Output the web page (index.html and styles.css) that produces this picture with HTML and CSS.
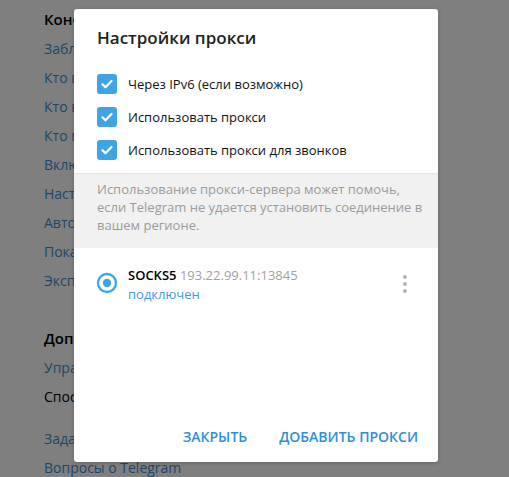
FILE: index.html
```html
<!DOCTYPE html>
<html lang="ru">
<head>
<meta charset="utf-8">
<link rel="stylesheet" href="styles.css">
</head>
<body>
<div class="page">
  <div class="settings">
    <div class="sec-title">Конфиденциальность</div>
    <div class="link">Заблокированные пользователи</div>
    <div class="link">Кто видит мой номер телефона</div>
    <div class="link">Кто видит время последнего входа</div>
    <div class="link">Кто может мне звонить</div>
    <div class="link">Включить пересылку сообщений</div>
    <div class="link">Настройки пригласительных ссылок</div>
    <div class="link">Автоудаление аккаунта</div>
    <div class="link">Показать все сеансы</div>
    <div class="link">Экспорт данных из Telegram</div>
    <div class="sec-title sec-gap">Дополнительно</div>
    <div class="link">Управление памятью устройства</div>
    <div class="plain">Способ подключения</div>
    <div class="link link-gap">Задать вопрос</div>
    <div class="link">Вопросы о Telegram</div>
  </div>
  <div class="overlay"></div>
  <div class="dialog">
    <div class="title">Настройки прокси</div>
    <div class="checks">
      <div class="check-row">
        <span class="box"><svg viewBox="0 0 20 20" width="20" height="20"><path d="M5.5 10.3l3 3 6-6.3" fill="none" stroke="#fff" stroke-width="2.2" stroke-linecap="round" stroke-linejoin="round"/></svg></span>
        <span class="label">Через IPv6 (если возможно)</span>
      </div>
      <div class="check-row">
        <span class="box"><svg viewBox="0 0 20 20" width="20" height="20"><path d="M5.5 10.3l3 3 6-6.3" fill="none" stroke="#fff" stroke-width="2.2" stroke-linecap="round" stroke-linejoin="round"/></svg></span>
        <span class="label">Использовать прокси</span>
      </div>
      <div class="check-row">
        <span class="box"><svg viewBox="0 0 20 20" width="20" height="20"><path d="M5.5 10.3l3 3 6-6.3" fill="none" stroke="#fff" stroke-width="2.2" stroke-linecap="round" stroke-linejoin="round"/></svg></span>
        <span class="label">Использовать прокси для звонков</span>
      </div>
    </div>
    <div class="about">Использование прокси-сервера может помочь, если Telegram не удается установить соединение в вашем регионе.</div>
    <div class="proxy">
      <svg class="radio" viewBox="0 0 22 22" width="22" height="22"><circle cx="11" cy="11" r="9" fill="none" stroke="#40a4e4" stroke-width="2.3"/><circle cx="11" cy="11" r="4.2" fill="#40a4e4"/></svg>
      <div class="proxy-info">
        <div class="proxy-line"><span class="proto">SOCKS5</span> <span class="addr">193.22.99.11:13845</span></div>
        <div class="status">подключен</div>
      </div>
      <div class="more"><span></span><span></span><span></span></div>
    </div>
    <div class="buttons">
      <span class="btn">Закрыть</span>
      <span class="btn">Добавить прокси</span>
    </div>
  </div>
</div>
</body>
</html>
```
FILE: styles.css
```css
html, body {
  margin: 0;
  padding: 0;
}
body {
  font-family: "Open Sans", "Noto Sans", sans-serif;
  background: #fff;
}
.page {
  position: relative;
  width: 509px;
  height: 477px;
  overflow: hidden;
}
.settings {
  padding: 5px 0 0 44px;
  font-size: 14px;
  line-height: 29px;
}
.sec-title {
  color: #000;
  font-weight: 600;
  font-size: 15px;
}
.sec-gap {
  margin-top: 29px;
}
.link {
  color: #3f8ecb;
}
.link-gap {
  margin-top: 13px;
}
.plain {
  color: #000;
}
.overlay {
  position: absolute;
  inset: 0;
  background: rgba(0, 0, 0, 0.5);
}
.dialog {
  position: absolute;
  left: 74px;
  top: 9px;
  width: 364px;
  height: 453px;
  background: #fff;
  border-radius: 3px;
  display: flex;
  flex-direction: column;
  box-shadow: 0 1px 4px rgba(0, 0, 0, 0.2);
}
.title {
  padding: 17px 23px 0;
  font-size: 17px;
  line-height: 24px;
  font-weight: 600;
  color: #222;
}
.checks {
  padding: 17px 23px 7px;
  display: flex;
  flex-direction: column;
}
.check-row {
  height: 33px;
  display: flex;
  align-items: center;
  gap: 11px;
}
.box {
  width: 20px;
  height: 20px;
  border-radius: 3px;
  background: #40a4e4;
  display: block;
}
.box svg {
  display: block;
}
.label {
  font-size: 13px;
  color: #111;
}
.about {
  background: #f1f1f1;
  box-shadow: inset 0 2px 2px -1px rgba(0, 0, 0, 0.06);
  padding: 7px 14px 14px 23px;
  font-size: 13px;
  line-height: 18px;
  color: #9b9b9b;
}
.proxy {
  display: flex;
  align-items: flex-start;
  padding: 17px 23px 0 22px;
}
.radio {
  flex: none;
  margin-top: 7px;
}
.proxy-info {
  margin-left: 10px;
  flex: 1;
}
.proxy-line {
  font-size: 13px;
  line-height: 20px;
}
.proto {
  font-weight: 600;
  color: #000;
}
.addr {
  color: #a2a2a2;
}
.status {
  font-size: 13px;
  line-height: 19px;
  color: #3e9ae0;
}
.more {
  display: flex;
  flex-direction: column;
  gap: 3px;
  margin-top: 10px;
  margin-right: 8px;
}
.more span {
  width: 4px;
  height: 4px;
  border-radius: 50%;
  background: #b4b4b4;
}
.buttons {
  margin-top: auto;
  display: flex;
  justify-content: flex-end;
  gap: 32px;
  padding: 0 20px 15px;
}
.btn {
  text-transform: uppercase;
  font-size: 14px;
  line-height: 20px;
  font-weight: 600;
  color: #2e90d8;
}
```
